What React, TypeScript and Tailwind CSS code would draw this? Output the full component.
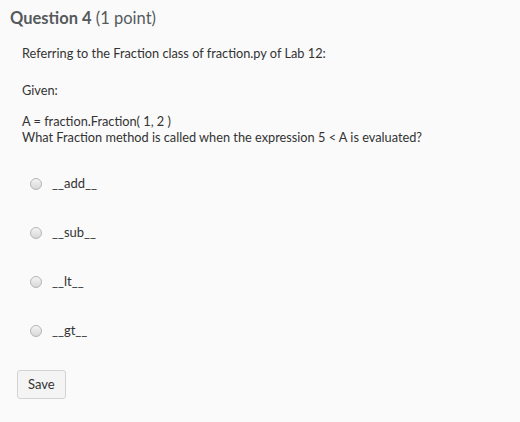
export default function App() {
  const options = ['__add__', '__sub__', '__lt__', '__gt__'];
  return (
    <div className="w-[520px] h-[422px] bg-[#fafafa] text-[#333] font-['Lato',sans-serif] overflow-hidden">
      <h2 className="pl-[10px] pt-[8px] text-[16.5px] leading-[20px] text-[#565a5c]">
        <span className="font-bold">Question 4</span> <span className="font-normal">(1 point)</span>
      </h2>
      <div className="pl-[22px] pt-[17px] text-[12.75px] leading-[16px]">
        <p>Referring to the Fraction class of fraction.py of Lab 12:</p>
        <p className="mt-[21px]">Given:</p>
        <p className="mt-[15px]">A = fraction.Fraction( 1, 2 )</p>
        <p>What Fraction method is called when the expression 5 &lt; A is evaluated?</p>
      </div>
      <div className="pl-[30px] pt-[31px] flex flex-col gap-[33px]">
        {options.map(o => (
          <label key={o} className="flex items-center gap-[10px] h-[16px] text-[13px]">
            <span className="w-[12px] h-[12px] rounded-full border border-[#b5b5b5] bg-gradient-to-b from-[#f4f4f4] to-[#d8d8d8]" />
            <span>{o}</span>
          </label>
        ))}
      </div>
      <div className="pl-[17px] pt-[31px]">
        <button className="h-[29px] px-[10px] rounded-[3px] border border-[#d3d3d3] bg-[#f4f4f4] text-[13px] text-[#333]">
          Save
        </button>
      </div>
    </div>
  );
}
